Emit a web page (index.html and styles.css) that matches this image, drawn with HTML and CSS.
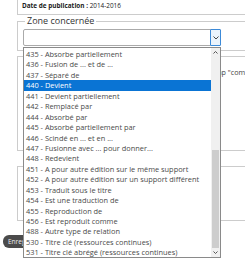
FILE: index.html
```html
<!DOCTYPE html>
<html lang="fr">
<head>
  <meta charset="UTF-8">
  <meta name="viewport" content="width=device-width, initial-scale=1.0">
  <title>Zone concernée</title>
  <link rel="stylesheet" href="styles.css">
</head>
<body>
  <div class="page">
    <div class="box-top">
      <p class="pub"><b>Date de publication :</b> 2014-2016</p>
    </div>

    <fieldset class="zone">
      <legend>Zone concernée</legend>
      <div class="select">
        <span class="select-value"></span>
        <span class="select-arrow">
          <svg width="6" height="4" viewBox="0 0 6 4"><path d="M0.5 0.5 L3 3 L5.5 0.5" fill="none" stroke="#444" stroke-width="1"/></svg>
        </span>
      </div>
    </fieldset>

    <div class="box box-comment">
      <p class="note">Champ "commentaire"</p>
    </div>
    <div class="box box-third"></div>
  </div>

  <button class="btn">Enregistrer</button>

  <div class="dropdown">
    <ul class="options" id="options"></ul>
    <div class="scrollbar">
      <span class="sb-arrow">
        <svg width="5" height="3" viewBox="0 0 5 3"><path d="M0.5 2.5 L2.5 0.5 L4.5 2.5" fill="none" stroke="#555" stroke-width="1"/></svg>
      </span>
      <div class="sb-track"><div class="sb-thumb"></div></div>
      <span class="sb-arrow">
        <svg width="5" height="3" viewBox="0 0 5 3"><path d="M0.5 0.5 L2.5 2.5 L4.5 0.5" fill="none" stroke="#555" stroke-width="1"/></svg>
      </span>
    </div>
  </div>

  <script>
    const relations = [
      "435 - Absorbe partiellement",
      "436 - Fusion de ... et de ...",
      "437 - Séparé de",
      "440 - Devient",
      "441 - Devient partiellement",
      "442 - Remplacé par",
      "444 - Absorbé par",
      "445 - Absorbé partiellement par",
      "446 - Scindé en ... et en ...",
      "447 - Fusionne avec ... pour donner...",
      "448 - Redevient",
      "451 - A pour autre édition sur le même support",
      "452 - A pour autre édition sur un support différent",
      "453 - Traduit sous le titre",
      "454 - Est une traduction de",
      "455 - Reproduction de",
      "456 - Est reproduit comme",
      "488 - Autre type de relation",
      "530 - Titre clé (ressources continues)",
      "531 - Titre clé abrégé (ressources continues)"
    ];

    const list = document.getElementById("options");
    relations.forEach(label => {
      const li = document.createElement("li");
      li.textContent = label;
      if (label.startsWith("440")) li.className = "selected";
      list.appendChild(li);
    });
  </script>
</body>
</html>
```

FILE: styles.css
```css
html, body { margin: 0; overflow: hidden; }
body { font-family: "Open Sans", Arial, sans-serif; color: #333; width: 245px; height: 274px; position: relative; }

.page { padding-left: 17px; width: 300px; }

.box-top { height: 14px; border: 1px solid #ccc; border-top: none; }
.pub { margin: 0; padding: 2px 0 0 4px; font-size: 6.4px; line-height: 8px; color: #222; }

.zone { margin: 0; padding: 0 0 4px 5px; border: 1px solid #ccc; }
.zone legend { padding: 0 2px; margin-left: 2px; font-size: 9px; line-height: 12px; color: #333; }

.select { display: flex; width: 198px; height: 17px; margin-top: 2px; box-sizing: border-box; border: 1px solid #aaa; border-radius: 2px; background: #fff; }
.select-value { flex: 1; }
.select-arrow { width: 9px; display: flex; align-items: center; justify-content: center; border: 1px solid #3c8ad8; border-radius: 1px; margin: -1px; background: #eaf3fc; }

.box { border: 1px solid #ccc; border-right: none; }
.box-comment { margin-top: 5px; height: 93px; }
.note { margin: 0; padding: 10px 0 0 184px; font-size: 7.2px; color: #444; }
.box-third { margin-top: 15px; height: 53px; }

.btn { display: block; margin: 14px 0 0 3px; height: 13px; padding: 0 5px; border: none; border-radius: 6px; background: #4b4b4b; color: #eee; font-family: "Open Sans", Arial, sans-serif; font-size: 6.5px; }

.dropdown { position: absolute; left: 23px; top: 47px; width: 198px; height: 211px; box-sizing: border-box; border: 1px solid #8a8a8a; background: #fff; display: flex; }
.options { list-style: none; margin: 0; padding: 1px 0 0; flex: 1; }
.options li { height: 10.45px; line-height: 10.45px; padding-left: 2px; font-size: 7.4px; color: #4a4a4a; white-space: nowrap; overflow: hidden; }
.options li.selected { background: #0a74d4; color: #fff; }

.scrollbar { width: 9px; display: flex; flex-direction: column; background: #f0f0f0; }
.sb-arrow { height: 9px; display: flex; align-items: center; justify-content: center; }
.sb-track { flex: 1; display: flex; flex-direction: column; justify-content: flex-end; }
.sb-thumb { height: 98px; margin: 0 1px; background: #cdcdcd; }
```
